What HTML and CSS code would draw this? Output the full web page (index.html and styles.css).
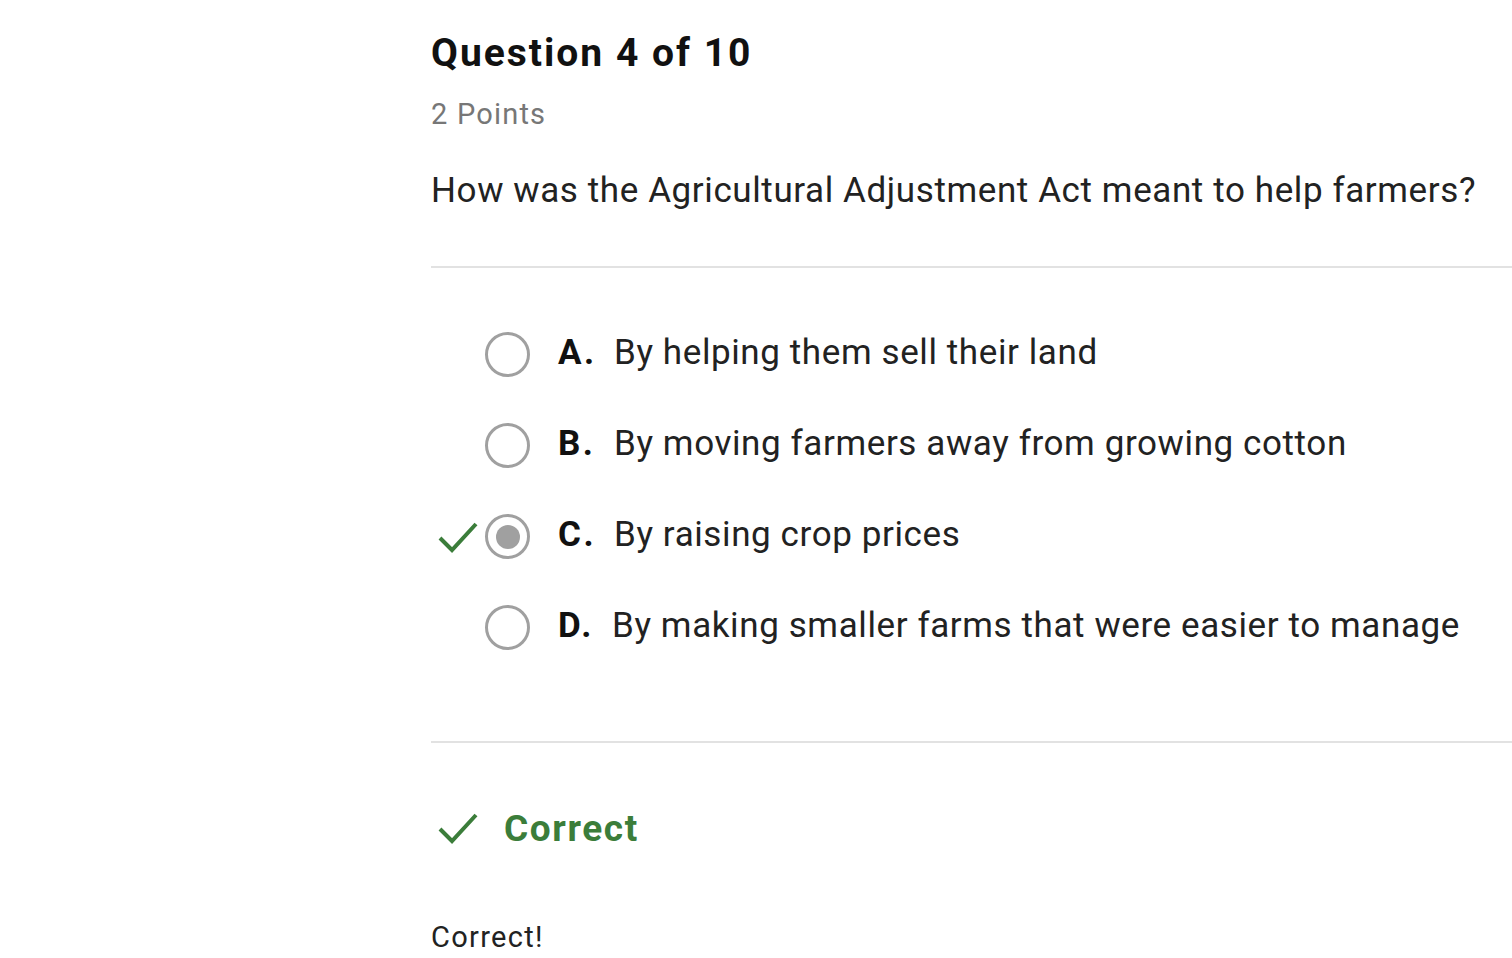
FILE: index.html
```html
<!DOCTYPE html>
<html>
<head>
<meta charset="utf-8">
<link rel="stylesheet" href="styles.css">
</head>
<body>
<main class="quiz">
  <h1 class="title">Question 4 of 10</h1>
  <div class="points">2 Points</div>
  <p class="question">How was the Agricultural Adjustment Act meant to help farmers?</p>
  <hr class="divider">
  <ul class="options">
    <li class="option">
      <span class="mark"></span>
      <span class="radio"></span>
      <span class="letter">A.</span>
      <span class="text">By helping them sell their land</span>
    </li>
    <li class="option">
      <span class="mark"></span>
      <span class="radio"></span>
      <span class="letter">B.</span>
      <span class="text">By moving farmers away from growing cotton</span>
    </li>
    <li class="option">
      <span class="mark"><svg viewBox="0 0 40 32" width="40" height="32"><path d="M2 17 L14 29 L38 3" fill="none" stroke="#3b7d3a" stroke-width="4"/></svg></span>
      <span class="radio checked"></span>
      <span class="letter">C.</span>
      <span class="text">By raising crop prices</span>
    </li>
    <li class="option">
      <span class="mark"></span>
      <span class="radio"></span>
      <span class="letter">D.</span>
      <span class="text text-d">By making smaller farms that were easier to manage</span>
    </li>
  </ul>
  <hr class="divider">
  <div class="result">
    <svg class="result-icon" viewBox="0 0 40 32" width="40" height="32"><path d="M2 17 L14 29 L38 3" fill="none" stroke="#3b7d3a" stroke-width="4"/></svg>
    <span class="result-label">Correct</span>
  </div>
  <p class="feedback">Correct!</p>
</main>
</body>
</html>
```
FILE: styles.css
```css
html, body {
  margin: 0;
  padding: 0;
  background: #ffffff;
}
body {
  font-family: Roboto, "Liberation Sans", sans-serif;
  color: #222222;
  overflow: hidden;
}
.quiz {
  padding-left: 431px;
  padding-top: 28px;
}
.title {
  margin: 0;
  font-size: 39px;
  font-weight: 700;
  letter-spacing: 2px;
  line-height: 50px;
  color: #111111;
}
.points {
  margin-top: 16px;
  font-size: 29px;
  letter-spacing: 1.2px;
  line-height: 40px;
  color: #777777;
}
.question {
  margin: 33px 0 0 0;
  font-size: 35px;
  letter-spacing: 0.6px;
  line-height: 48px;
  color: #222222;
}
.divider {
  border: 0;
  border-top: 2px solid #e2e2e2;
  margin: 0;
}
.question + .divider {
  margin-top: 51px;
}
.options {
  list-style: none;
  margin: 0;
  padding: 39px 0 0 0;
}
.option {
  display: flex;
  align-items: center;
  height: 91px;
}
.mark {
  width: 54px;
  display: flex;
  justify-content: flex-start;
  padding-left: 7px;
  box-sizing: border-box;
  padding-top: 4px;
}
.radio {
  width: 45px;
  height: 45px;
  box-sizing: border-box;
  border: 3.5px solid #a0a0a0;
  border-radius: 50%;
  display: flex;
  align-items: center;
  justify-content: center;
  margin-top: 4px;
}
.radio.checked::after {
  content: "";
  width: 24px;
  height: 24px;
  border-radius: 50%;
  background: #a0a0a0;
}
.letter {
  font-size: 35px;
  font-weight: 700;
  letter-spacing: 2.5px;
  margin-left: 28px;
  width: 56px;
  color: #111111;
}
.text {
  font-size: 35px;
  letter-spacing: 0.6px;
  color: #222222;
}
.text-d {
  margin-left: -2px;
}
.options + .divider {
  margin-top: 70px;
}
.result {
  display: flex;
  align-items: center;
  margin-top: 62px;
  height: 46px;
}
.result-icon {
  margin-left: 7px;
}
.result-label {
  margin-left: 26px;
  font-size: 37px;
  font-weight: 700;
  letter-spacing: 1.6px;
  color: #3b7d3a;
}
.feedback {
  margin: 66px 0 0 0;
  font-size: 29px;
  letter-spacing: 1.3px;
  line-height: 40px;
  color: #222222;
}
```
